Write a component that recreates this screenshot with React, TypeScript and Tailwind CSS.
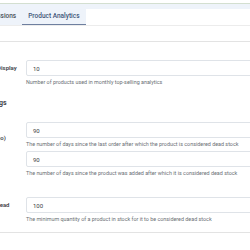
import React from "react";

type Row = { label: string[]; value: string; help: string; mt?: string };

const topRow: Row = {
  label: ["Top Products to Display"],
  value: "10",
  help: "Number of products used in monthly top-selling analytics",
};

const deadRows: Row[] = [
  {
    label: ["Dead Stock Days", "(Last Sale Day Ago)"],
    value: "90",
    help: "The number of days since the last order after which the product is considered dead stock",
    mt: "mt-0",
  },
  {
    label: ["Age in Stock"],
    value: "90",
    help: "The number of days since the product was added after which it is considered dead stock",
    mt: "mt-[4px]",
  },
  {
    label: ["Qty Considered Dead"],
    value: "100",
    help: "The minimum quantity of a product in stock for it to be considered dead stock",
    mt: "mt-[21px]",
  },
];

function Field({ label, value, help }: Row) {
  return (
    <div className="flex">
      <div className="w-[73px] shrink-0 pt-[4px] text-[6px] font-semibold text-[#3f4349] leading-[8px] whitespace-nowrap">
        {label.map((l, i) => (
          <div key={i}>{l}</div>
        ))}
      </div>
      <div className="flex-1 min-w-0">
        <div className="h-[16px] w-[260px] border border-[#dfe3e8] rounded-[2px] bg-white flex items-center pl-[6px] text-[6px] text-[#3a3d42]">
          {value}
        </div>
        <div className="mt-[3px] text-[5.4px] leading-[6px] text-[#6b6f75] whitespace-nowrap">{help}</div>
      </div>
    </div>
  );
}

export default function App() {
  return (
    <div
      className="w-[250px] h-[250px] overflow-hidden bg-white relative"
      style={{ fontFamily: "Roboto, 'Liberation Sans', sans-serif" }}
    >
      <div className="h-[3px]" />
      <div className="h-px bg-[#d3dfd0]" />
      <div className="h-[5px] bg-[#eef3fa]" />
      <div className="flex h-[17px] border-b border-[#ececec]">
        <div className="flex -ml-[26px] bg-[#eef3fa]">
          <div className="px-[6px] flex items-center text-[6.5px] text-[#4b5058] font-medium">Permissions</div>
          <div className="px-[6px] flex items-center text-[6.5px] text-[#3e5578] font-medium border-b border-[#6e7f9f]">
            Product Analytics
          </div>
        </div>
      </div>
      <div className="h-[15px]" />
      <div className="h-px bg-[#e3e3e3]" />
      <div className="-ml-[47px] pt-[18px]">
        <Field {...topRow} />
        <div className="mt-[14px] -ml-[10px] text-[7px] font-bold text-[#3f4349] leading-[8px]">
          Dead Stock Settings
        </div>
        <div className="mt-[15px]">
          {deadRows.map((r, i) => (
            <div key={i} className={r.mt}>
              <Field {...r} />
            </div>
          ))}
        </div>
        <div className="h-[10px]" />
      </div>
      <div className="h-px bg-[#e3e3e3]" />
    </div>
  );
}
